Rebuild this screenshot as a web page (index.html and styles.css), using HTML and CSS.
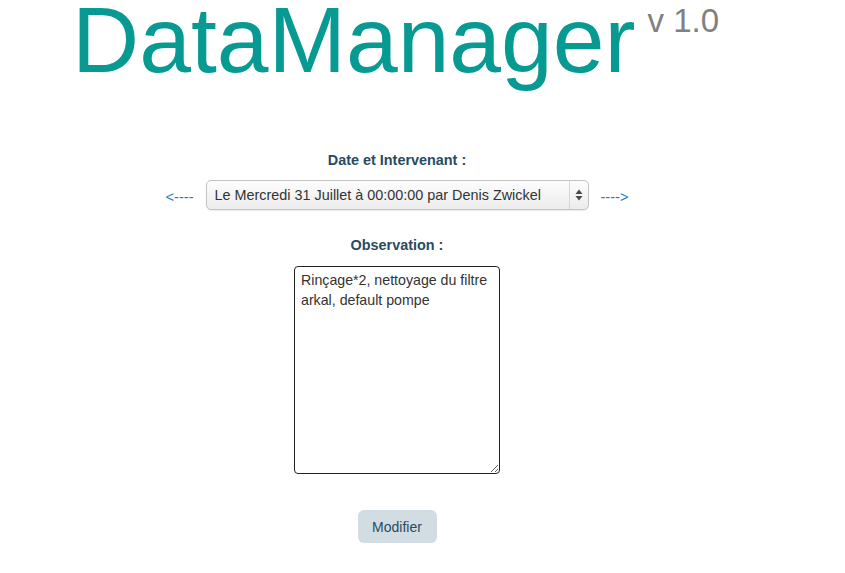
FILE: index.html
```html
<!DOCTYPE html>
<html lang="fr">
<head>
<meta charset="utf-8">
<title>DataManager</title>
<link rel="stylesheet" href="styles.css">
</head>
<body>
<header class="header">
  <h1 class="title">DataManager<span class="version">v 1.0</span></h1>
</header>
<main class="form">
  <label class="label label-date" for="date">Date et Intervenant :</label>
  <div class="nav-row">
    <a class="nav-arrow" href="#">&lt;----</a>
    <div class="select-wrap">
      <select id="date" class="select">
        <option>Le Mercredi 31 Juillet à 00:00:00 par Denis Zwickel</option>
      </select>
      <span class="select-arrows">
        <svg width="8" height="12" viewBox="0 0 8 12"><path d="M4 0.5 L7.5 5 L0.5 5 Z M4 11.5 L7.5 7 L0.5 7 Z" fill="#4a4a4a"/></svg>
      </span>
    </div>
    <a class="nav-arrow" href="#">----&gt;</a>
  </div>
  <label class="label label-obs" for="obs">Observation :</label>
  <textarea id="obs" class="textarea">Rinçage*2, nettoyage du filtre arkal, default pompe</textarea>
  <button class="button" type="button">Modifier</button>
</main>
</body>
</html>
```
FILE: styles.css
```css
html, body {
  margin: 0;
  padding: 0;
  background: #ffffff;
}

body {
  width: 845px;
  font-family: "Liberation Sans", Arial, sans-serif;
}

.header {
  padding-left: 72px;
}

.title {
  margin: 0;
  font-family: "Liberation Sans", Arial, sans-serif;
  font-weight: normal;
  font-size: 93px;
  line-height: 80px;
  height: 80px;
  color: #079a93;
  white-space: nowrap;
}

.version {
  font-size: 33px;
  line-height: 0;
  color: #808080;
  margin-left: 12px;
  vertical-align: 40px;
}

.form {
  width: 794px;
  display: flex;
  flex-direction: column;
  align-items: center;
  padding-top: 72px;
}

.label {
  font-size: 14.4px;
  line-height: 16px;
  font-weight: bold;
  color: #284b63;
}

.nav-row {
  margin-top: 12px;
  display: flex;
  align-items: center;
  gap: 12px;
}

.nav-arrow {
  font-size: 14.6px;
  color: #1c7cc6;
  text-decoration: none;
  line-height: 16px;
  padding-top: 3px;
}

.select-wrap {
  position: relative;
  width: 383px;
  height: 30px;
}

.select {
  -webkit-appearance: none;
  appearance: none;
  box-sizing: border-box;
  width: 100%;
  height: 30px;
  margin: 0;
  padding: 0 24px 0 8px;
  border: 1px solid #c3c3c3;
  border-radius: 5px;
  background: linear-gradient(#fdfdfd, #ececec);
  box-shadow: 0 1px 1px rgba(0,0,0,0.08);
  font-family: "Liberation Sans", Arial, sans-serif;
  font-size: 14.4px;
  color: #333333;
  outline: none;
}

.select-arrows {
  position: absolute;
  top: 1px;
  right: 1px;
  bottom: 1px;
  width: 18px;
  border-left: 1px solid #d6d6d6;
  display: flex;
  align-items: center;
  justify-content: center;
  pointer-events: none;
}

.label-obs {
  margin-top: 27px;
}

.textarea {
  margin-top: 13px;
  box-sizing: border-box;
  width: 206px;
  height: 208px;
  padding: 3px 5px 3px 6px;
  border: 1px solid #222222;
  border-radius: 4px;
  font-family: "Liberation Sans", Arial, sans-serif;
  font-size: 14.2px;
  line-height: 20px;
  color: #333333;
  resize: both;
  outline: none;
}

.button {
  margin-top: 36px;
  width: 79px;
  height: 33px;
  border: none;
  border-radius: 6px;
  background: #d1dce3;
  color: #2a4b60;
  font-family: "Liberation Sans", Arial, sans-serif;
  font-size: 14px;
  padding: 0;
}
```
